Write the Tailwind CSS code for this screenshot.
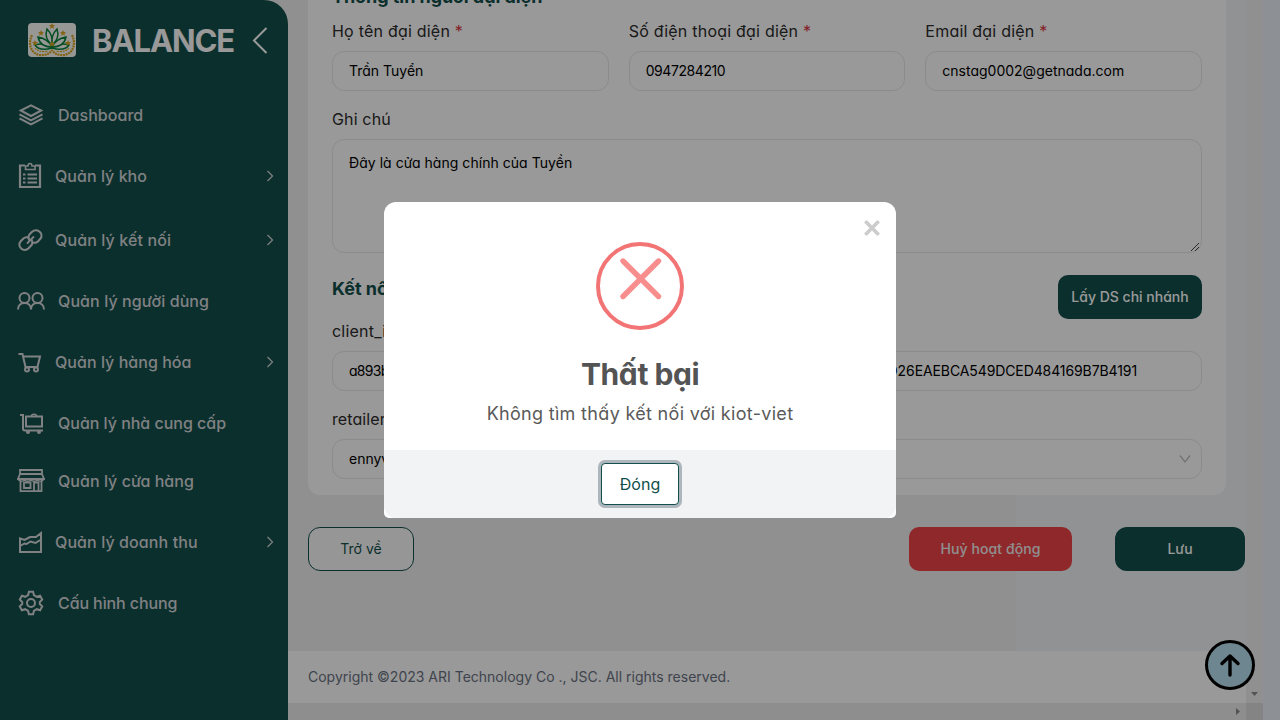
<!DOCTYPE html>
<html lang="vi">
<head>
<meta charset="utf-8">
<title>Balance</title>
<script src="https://cdn.jsdelivr.net/npm/@tailwindcss/browser@4"></script>
</head>
<body class="relative flex h-[720px] w-[1280px] overflow-hidden bg-[#ebf2fa] font-['Inter','Noto_Sans',sans-serif] [font-feature-settings:'cv11'] text-black">

<!-- Sidebar -->
<div class="h-full w-[288px] shrink-0 bg-[#f1f1f1]">
<aside class="flex h-full w-full flex-col rounded-tr-[24px] bg-[#134f4c] text-[#d5d8da]">
  <div class="flex h-[86px] items-start pl-7 pt-[23px]">
    <svg class="h-[34px] w-12 shrink-0 rounded bg-[#fcfcfa]" viewBox="0 0 48 34" fill="none">
      <g stroke="#d9a520" stroke-width="2.2" stroke-dasharray="2 .7">
        <path d="M4 12C-1 22 4 33 15 32c4 0 7-2 9-5"/>
        <path d="M44 12c5 10 0 21-11 20-4 0-7-2-9-5"/>
        <path d="M7 25c3 4 9 4 13 3M41 25c-3 4-9 4-13 3" stroke-width="1.2"/>
      </g>
      <g stroke="#07833d" stroke-width="1.5" fill="#fcfcfa">
        <path d="M24 25C13 28 9 25 7 22c6-2 12-1 17 3ZM24 25c11 3 15 0 17-3-6-2-12-1-17 3Z"/>
        <path d="M24 24C15 24 11 19 10 14c6 1 11 4 14 10ZM24 24c9 0 13-5 14-10-6 1-11 4-14 10Z"/>
        <path d="M24 22c-5-4-7-10-5-16 4 4 6 9 5 16ZM24 22c5-4 7-10 5-16-4 4-6 9-5 16Z"/>
      </g>
      <g fill="#d9a520">
        <path id="star" d="m24 0 .9 2.1 2.2.1-1.7 1.4.6 2.2-2-1.2-2 1.2.6-2.2-1.7-1.4 2.2-.1Z"/>
        <use href="#star" x="-11" y="7"/><use href="#star" x="11" y="7"/>
        <use href="#star" x="-17" y="17"/><use href="#star" x="16" y="17"/><use href="#star" y="18"/>
      </g>
    </svg>
    <h1 class="ml-4 w-[142px] whitespace-nowrap text-[31px] font-bold leading-[35px] tracking-[-1.1px] text-white">BALANCE</h1>
    <svg class="ml-[18px] mt-1 h-[27px] w-4" viewBox="0 0 16 27" fill="none" stroke="#fff" stroke-width="2"><path d="M14.5 1 2 13.5 14.5 26"/></svg>
  </div>
  <nav class="flex flex-col text-base font-medium tracking-[0.04px]">
    <a class="flex h-[58px] items-center pl-[17px]">
      <svg class="size-7" viewBox="17 101 28 28" fill="none" stroke="currentColor" stroke-width="2"><path d="m31 105.3 10.3 5.2L31 116l-10.3-5.5Z"/><path d="m19.5 114.3 11.5 6 11.5-6M19.500 118.300l11.500 6 11.500-6"/></svg>
      <span class="ml-[13px]">Dashboard</span>
    </a>
    <a class="flex h-16 items-center pl-[17px] pr-[14px]">
      <svg class="size-7" viewBox="17 162 28 28" fill="none" stroke="currentColor" stroke-width="2.200"><path d="M25 165.500h-5V187h20v-21.500h-5"/><path d="M25.500 169.500v-3.500H28c0-3.400 4-3.400 4 0h3v3.500Z" stroke-width="1.600"/><path d="M27.500 174.500H37M27.500 178.500H37M27.500 182.500H37M23 174.500h2.500M23 178.500h2.500M23 182.500h2.500" stroke-width="1.900"/></svg>
      <span class="ml-[10px] flex-1">Quản lý kho</span>
      <svg class="h-3 w-2" viewBox="0 0 8 12" fill="none" stroke="currentColor" stroke-width="1.200"><path d="m1.500 1 5 5-5 5"/></svg>
    </a>
    <a class="flex h-16 items-center pl-[17px] pr-[14px]">
      <svg class="size-7" viewBox="17 226 28 28" fill="none" stroke="currentColor" stroke-width="2.100" stroke-linecap="round"><path d="M29.300 240c-1.400-2.600-.8-4.600.8-6.200l2-2c5-4.600 12.500 2 8 7.300l-2.200 2.300c-1.400 1.300-2.900 1.600-4.200 1.300"/><path d="M31.300 239.500c1.700 2.500 1.200 4.700-.4 6.300l-2.300 2.500c-5 4.600-12.300-1.900-7.700-7.300l2.300-2.300c1.300-1.300 2.800-1.600 4.300-1.300"/><path d="m27.500 243 6-6" stroke-width="1.800"/></svg>
      <span class="ml-[10px] flex-1 tracking-[0.12px]">Quản lý kết nối</span>
      <svg class="h-3 w-2" viewBox="0 0 8 12" fill="none" stroke="currentColor" stroke-width="1.200"><path d="m1.500 1 5 5-5 5"/></svg>
    </a>
    <a class="flex h-[58px] items-center pl-[17px]">
      <svg class="size-7" viewBox="17 287 28 28" fill="none" stroke="currentColor" stroke-width="2"><circle cx="24.500" cy="298" r="5"/><circle cx="37.500" cy="298" r="5"/><path d="M18 309.500c0-8.700 13-8.700 13 0 0-8.700 13-8.700 13 0"/></svg>
      <span class="ml-[13px] tracking-[0.1px]">Quản lý người dùng</span>
    </a>
    <a class="flex h-16 items-center pl-[17px] pr-[14px]">
      <svg class="size-7" viewBox="17 348 28 28" fill="none" stroke="currentColor" stroke-width="2"><path d="M18.500 354h4l3 13h12l2.500-10.500H24"/><circle cx="27" cy="369.500" r="2"/><circle cx="36" cy="369.500" r="2"/></svg>
      <span class="ml-[10px] flex-1">Quản lý hàng hóa</span>
      <svg class="h-3 w-2" viewBox="0 0 8 12" fill="none" stroke="currentColor" stroke-width="1.200"><path d="m1.500 1 5 5-5 5"/></svg>
    </a>
    <a class="flex h-[58px] items-center pl-[17px]">
      <svg class="size-7" viewBox="17 409 28 28" fill="none" stroke="currentColor" stroke-width="2"><path d="M20 415h3v13.500q0 2 2 2h18M26 416.500h16v10H26Z"/><path d="M31.500 416c0-2.400 5-2.400 5 0" stroke-width="1.600"/><circle cx="28" cy="432" r="1"/><circle cx="39" cy="432" r="1"/></svg>
      <span class="ml-[13px] tracking-[-0.02px]">Quản lý nhà cung cấp</span>
    </a>
    <a class="flex h-[58px] items-center pl-[17px]">
      <svg class="size-7" viewBox="17 467 28 28" fill="none" stroke="currentColor" stroke-width="1.800"><path d="M20 470h22v4H20ZM20 474l-2 5h26l-2-5"/><path d="M18 478c1 4 6 4 6.500 1 .5 3 6 3 6.500 0 .5 3 6 3 6.500 0 .5 3 5.500 3 6.500-1" stroke-width="1.500"/><path d="M20.500 481v10.200h21V481M24 482.500h6.500v5.500H24ZM34 491v-8.500h4.500V491"/></svg>
      <span class="ml-[13px]">Quản lý cửa hàng</span>
    </a>
    <a class="flex h-16 items-center pl-[17px] pr-[14px]">
      <svg class="size-7" viewBox="17 528 28 28" fill="none" stroke="currentColor" stroke-width="2"><path d="M20 538.500V552h21v-19l-5 4h-6l-5.500 3ZM20 546l4.500-2.500 2 .5 4-2.500 5 1.500 5.500-3.500"/></svg>
      <span class="ml-[10px] flex-1 tracking-[0.1px]">Quản lý doanh thu</span>
      <svg class="h-3 w-2" viewBox="0 0 8 12" fill="none" stroke="currentColor" stroke-width="1.200"><path d="m1.500 1 5 5-5 5"/></svg>
    </a>
    <a class="flex h-[58px] items-center pl-[17px]">
      <svg class="size-7" viewBox="17 589 28 28" fill="none" stroke="currentColor" stroke-width="2"><circle cx="31" cy="603" r="4"/><path d="M28.900 591.800h4.200l.8 3.300 2.900 1.700 3.300-1 2.100 3.800-2.400 2.400v2l2.400 2.400-2.100 3.800-3.300-1-2.900 1.700-.8 3.300h-4.200l-.8-3.300-2.900-1.700-3.300 1-2.100-3.800 2.400-2.400v-2l-2.400-2.400 2.100-3.800 3.300 1 2.900-1.700Z"/></svg>
      <span class="ml-[13px] tracking-[-0.1px]">Cấu hình chung</span>
    </a>
  </nav>
</aside>
</div>

<!-- Page content -->
<div class="flex h-full w-[975px] flex-col bg-[#f1f1f1]">
  <div class="flex h-[703px]">
    <main class="flex w-[958px] flex-col overflow-hidden bg-[linear-gradient(90deg,#f1f1f1_728px,#f2f4f6_728px)]">
      <section class="ml-5 h-[495px] w-[918px] shrink-0 rounded-b-xl bg-white px-6">
        <h2 class="-mt-[17px] text-lg font-bold leading-7 tracking-[-0.05px] text-[#134f4c]">Thông tin người đại diện</h2>
        <div class="mt-2 grid grid-cols-3 gap-5">
          <div>
            <label class="block text-base leading-6 tracking-[0.22px] text-[#2c2c2c]">Họ tên đại diện <span class="text-[#dc3545]">*</span></label>
            <div class="mt-2 flex h-10 items-center rounded-xl border border-[#e8e8ea] px-4 text-sm">Trần Tuyển</div>
          </div>
          <div>
            <label class="block text-base leading-6 tracking-[0.22px] text-[#2c2c2c]">Số điện thoại đại diện <span class="text-[#dc3545]">*</span></label>
            <div class="mt-2 flex h-10 items-center rounded-xl border border-[#e8e8ea] px-4 text-sm tracking-[-0.42px]">0947284210</div>
          </div>
          <div>
            <label class="block text-base leading-6 tracking-[0.22px] text-[#2c2c2c]">Email đại diện <span class="text-[#dc3545]">*</span></label>
            <div class="mt-2 flex h-10 items-center rounded-xl border border-[#e8e8ea] px-4 text-sm">cnstag0002@getnada.com</div>
          </div>
        </div>
        <label class="mt-4 block text-base leading-6 tracking-[0.15px] text-[#2c2c2c]">Ghi chú</label>
        <div class="mt-2 flex h-[114px] justify-between rounded-xl border border-[#e8e8ea] pl-4 pr-px pt-[13px] text-sm leading-5">
          <span class="tracking-[0.04px]">Đây là cửa hàng chính của Tuyền</span>
          <svg class="size-[10px] self-end" viewBox="0 0 10 10" stroke="#444" stroke-width="1"><path d="m1 9 8-8M5 9l4-4"/></svg>
        </div>
        <div class="mt-[22px] flex h-11 justify-between">
          <h2 class="text-lg font-bold leading-7 text-[#134f4c]">Kết nối Kiot Viet</h2>
          <button class="h-11 w-36 whitespace-nowrap rounded-[10px] bg-[#134f4c] text-sm font-medium text-white">Lấy DS chi nhánh</button>
        </div>
        <label class="block text-base leading-6 tracking-[0.22px] text-[#2c2c2c]">client_id</label>
        <div class="mt-2 flex h-10 items-center justify-between rounded-xl border border-[#e8e8ea] pl-4 pr-16 text-sm"><span class="tracking-[-0.7px]">a893b</span><span class="tracking-[-0.1px]">D26EAEBCA549DCED484169B7B4191</span></div>
        <label class="mt-4 block text-base leading-6 tracking-[0.1px] text-[#2c2c2c]">retailer</label>
        <div class="mt-2 flex h-10 items-center justify-between rounded-xl border border-[#e8e8ea] pl-4 pr-[10px] text-sm"><span>ennyv</span>
          <svg class="h-[10px] w-3" viewBox="0 0 12 10" fill="none" stroke="#bfbfbf" stroke-width="1.300"><path d="m1 1.500 5 6.500 5-6.500"/></svg>
        </div>
      </section>
      <div class="mt-8 flex h-11 shrink-0 pl-5 text-sm">
        <button class="w-[106px] rounded-xl border border-[#134f4c] bg-white/70 text-[#134f4c]">Trở về</button>
        <button class="ml-auto w-[163px] rounded-[10px] bg-[#ef4448] font-medium tracking-[0.1px] text-[#eeeeee]">Huỷ hoạt động</button>
        <button class="ml-[43px] mr-px w-[130px] rounded-xl bg-[#134f4c] font-medium text-white">Lưu</button>
      </div>
      <footer class="mt-20 flex h-[52px] shrink-0 items-center bg-white pl-5 text-sm text-gray-500">Copyright ©2023 ARI Technology Co ., JSC. All rights reserved.</footer>
    </main>
    <div class="flex w-[17px] flex-col items-center justify-end bg-[#f1f1f1] pb-[7px]">
      <svg class="h-1 w-[7px]" viewBox="0 0 7 4" fill="#8a8a8a"><path d="M0 0h7L3.500 4Z"/></svg>
    </div>
  </div>
  <div class="flex h-[17px]">
    <div class="flex flex-1 items-center justify-end bg-[#ededed] pr-[6px]"><svg class="h-[7px] w-1" viewBox="0 0 4 7" fill="#8a8a8a"><path d="M0 0v7l4-3.500Z"/></svg></div>
    <div class="w-[17px] bg-[#dcdcdc]"></div>
  </div>
</div>

<!-- Scroll-to-top button -->
<button class="absolute left-[1205px] top-[640px] flex size-[50px] items-center justify-center rounded-full border-3 border-black bg-[#b6e0ee]">
  <svg class="size-6" viewBox="0 0 24 24" fill="none" stroke="#000" stroke-width="3.400" stroke-linecap="round" stroke-linejoin="round"><path d="M12 22V3M4 10.500 12 3l8 7.500"/></svg>
</button>

<!-- Dialog -->
<div class="absolute inset-0 flex items-start justify-center bg-black/40 pt-[202px]">
  <div class="relative flex h-[316px] w-[512px] flex-col items-center rounded-t-xl rounded-b-[5px] bg-white">
    <svg class="absolute right-4 top-[18px] size-4" viewBox="0 0 16 16" stroke="#ccc" stroke-width="3.600"><path d="m1.300 1.300 13.400 13.400M14.700 1.300 1.300 14.700"/></svg>
    <svg class="mt-10 size-[88px] shrink-0" viewBox="596 242 88 88" fill="none"><circle cx="640" cy="286" r="42" stroke="#f27474" stroke-width="4"/><path d="m623 261 35.500 35.500M658.500 261 623 296.500" stroke="#f88d8d" stroke-width="5.400" stroke-linecap="round"/></svg>
    <h2 class="mt-6 text-[30px] font-bold leading-10 tracking-[-0.5px] text-[#545454]">Thất bại</h2>
    <p class="mt-[6px] text-lg leading-7 tracking-[0.31px] text-[#5a5a5a]">Không tìm thấy kết nối với kiot-viet</p>
    <div class="mt-auto flex h-[68px] w-full items-center justify-center rounded-b-xl bg-[#f2f3f5]">
      <button class="h-[42px] w-[78px] rounded border border-[#134f4c] bg-white text-base text-[#134f4c] ring-3 ring-[#adb5bd]">Đóng</button>
    </div>
  </div>
</div>
</body>
</html>
